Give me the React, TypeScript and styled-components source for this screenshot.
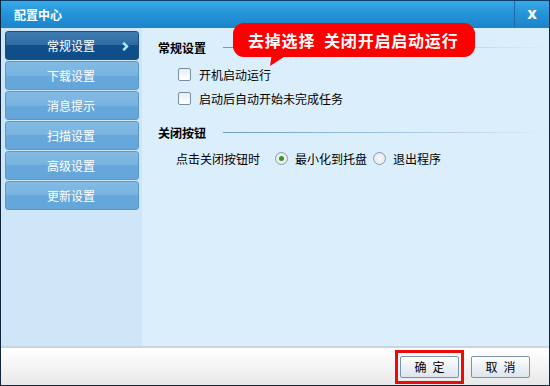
import React from "react";
import styled, { createGlobalStyle } from "styled-components";

const GlobalStyle = createGlobalStyle`
  html, body {
    margin: 0;
    padding: 0;
    background: #ffffff;
  }
  body {
    font-family: "Noto Sans CJK SC", "Liberation Sans", sans-serif;
    font-size: 12px;
  }
`;

const Window = styled.div`
  width: 550px;
  height: 386px;
  box-sizing: border-box;
  border: 1px solid #10263f;
  border-top: none;
  display: flex;
  flex-direction: column;
  position: relative;
  overflow: hidden;
`;

const TitleBar = styled.div`
  height: 28px;
  flex: none;
  display: flex;
  align-items: center;
  background: linear-gradient(#38aae8, #2594d8 45%, #1b84cc);
  border-top: 1px solid #0e3f6e;
  box-sizing: border-box;
`;

const Title = styled.div`
  flex: 1;
  padding-left: 13px;
  color: #ffffff;
  font-weight: bold;
  font-size: 12px;
`;

const CloseButton = styled.div`
  width: 34px;
  align-self: stretch;
  border-left: 1px solid #1a6aa8;
  display: flex;
  align-items: center;
  justify-content: center;
  color: #ffffff;
  font-family: "DejaVu Sans", sans-serif;
  font-weight: bold;
  font-size: 15px;
  padding-bottom: 2px;
`;

const Body = styled.div`
  flex: 1;
  display: flex;
  min-height: 0;
`;

const Sidebar = styled.div`
  width: 141px;
  flex: none;
  background: #cfe5f8;
  padding: 3px 3px 0 4px;
  box-sizing: border-box;
  display: flex;
  flex-direction: column;
  gap: 1px;
`;

const NavItem = styled.div<{ $active?: boolean }>`
  height: 29px;
  box-sizing: border-box;
  border: 1px solid ${(p) => (p.$active ? "#1b4f80" : "#5a99cf")};
  border-radius: 3px;
  background: ${(p) =>
    p.$active
      ? "linear-gradient(#3e7cb1, #2e6aa0 50%, #104f8c 50%, #0f4d88)"
      : "linear-gradient(#82bbe4, #78b3e0 50%, #67a8dc 50%, #64a5da)"};
  color: #ffffff;
  display: flex;
  align-items: center;
  justify-content: center;
  position: relative;
  padding-right: 2px;
`;

const Chevron = styled.svg`
  position: absolute;
  right: 9px;
  top: 10px;
`;

const Content = styled.div`
  flex: 1;
  background: #dbeefc;
  padding: 11px 0 0 16px;
  display: flex;
  flex-direction: column;
`;

const SectionHead = styled.div<{ $gapTop?: number }>`
  display: flex;
  align-items: center;
  height: 16px;
  font-weight: bold;
  color: #000000;
  gap: 17px;
  margin-top: ${(p) => p.$gapTop ?? 0}px;
  margin-bottom: 7px;
`;

const HeadLine = styled.div`
  flex: 1;
  height: 1px;
  background: linear-gradient(to right, #6c9bc4, #a9cbe6 60%, #dbeefc);
`;

const Option = styled.label`
  display: flex;
  align-items: center;
  gap: 8px;
  height: 24px;
  padding-left: 20px;
  color: #000000;
`;

const Box = styled.span`
  width: 11px;
  height: 11px;
  border: 1px solid #7a8ea2;
  border-radius: 2px;
  background: linear-gradient(#e8edf2, #ffffff);
`;

const RadioRow = styled.div`
  display: flex;
  align-items: center;
  height: 24px;
  padding-left: 18px;
  margin-top: -1px;
`;

const RadioLabel = styled.span`
  margin-right: 15px;
`;

const RadioDot = styled.span<{ $on?: boolean }>`
  width: 11px;
  height: 11px;
  border: 1px solid #8b9cad;
  border-radius: 50%;
  background: radial-gradient(circle, #f8fafc, #dde4eb);
  display: inline-flex;
  align-items: center;
  justify-content: center;
  margin-right: 7px;
  &::after {
    content: "";
    width: 5px;
    height: 5px;
    border-radius: 50%;
    background: ${(p) => (p.$on ? "#2e9a1e" : "transparent")};
  }
`;

const RadioText = styled.span`
  margin-right: 6px;
`;

const Footer = styled.div`
  height: 39px;
  flex: none;
  box-sizing: border-box;
  border-top: 2px solid #c8d6e2;
  background: linear-gradient(#ffffff, #f2f2f2 60%, #e8e8e8);
  display: flex;
  align-items: center;
  justify-content: flex-end;
  padding-right: 19px;
  gap: 7px;
`;

const Highlight = styled.div`
  border: 3px solid #ee0a0a;
  padding: 3px 2px;
  display: flex;
`;

const Button = styled.button`
  width: 59px;
  height: 22px;
  border: 1px solid #7c93ae;
  border-radius: 2px;
  background: linear-gradient(#ffffff, #edf1f5 50%, #dde4ec);
  font-family: "Noto Sans CJK SC", sans-serif;
  font-size: 12px;
  color: #000000;
  letter-spacing: 6px;
  padding: 0 0 0 6px;
`;

const Callout = styled.div`
  position: absolute;
  left: 232px;
  top: 23px;
  width: 242px;
  height: 34px;
  background: #ff0000;
  border-radius: 11px;
  color: #ffffff;
  font-weight: bold;
  font-size: 16px;
  letter-spacing: 0.8px;
  display: flex;
  align-items: center;
  padding-left: 15px;
  box-sizing: border-box;
  white-space: pre;
  &::after {
    content: "";
    position: absolute;
    left: 36px;
    top: 30px;
    border-left: 4px solid transparent;
    border-right: 14px solid transparent;
    border-top: 13px solid #ff0000;
    transform: skewX(-25deg);
  }
`;

const navItems = ["常规设置", "下载设置", "消息提示", "扫描设置", "高级设置", "更新设置"];

export default function App() {
  return (
    <>
      <GlobalStyle />
      <Window>
        <TitleBar>
          <Title>配置中心</Title>
          <CloseButton>x</CloseButton>
        </TitleBar>
        <Body>
          <Sidebar>
            {navItems.map((item, i) => (
              <NavItem key={item} $active={i === 0}>
                {item}
                {i === 0 && (
                  <Chevron width="7" height="9" viewBox="0 0 7 9">
                    <polyline
                      points="1.2,0.8 5,4.5 1.2,8.2"
                      fill="none"
                      stroke="#b8e8ff"
                      strokeWidth="2.4"
                    />
                  </Chevron>
                )}
              </NavItem>
            ))}
          </Sidebar>
          <Content>
            <SectionHead>
              常规设置
              <HeadLine />
            </SectionHead>
            <Option>
              <Box />
              开机启动运行
            </Option>
            <Option>
              <Box />
              启动后自动开始未完成任务
            </Option>
            <SectionHead $gapTop={14}>
              关闭按钮
              <HeadLine />
            </SectionHead>
            <RadioRow>
              <RadioLabel>点击关闭按钮时</RadioLabel>
              <RadioDot $on />
              <RadioText>最小化到托盘</RadioText>
              <RadioDot />
              <RadioText>退出程序</RadioText>
            </RadioRow>
          </Content>
        </Body>
        <Footer>
          <Highlight>
            <Button>确定</Button>
          </Highlight>
          <Button>取消</Button>
        </Footer>
        <Callout>{"去掉选择  关闭开启启动运行"}</Callout>
      </Window>
    </>
  );
}
